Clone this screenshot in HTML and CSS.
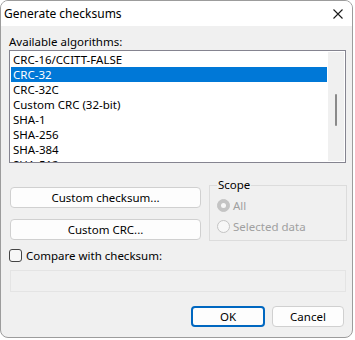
FILE: index.html
```html
<!DOCTYPE html>
<html lang="en">
<head>
    <meta charset="UTF-8">
    <title>Generate checksums</title>
    <link rel="stylesheet" href="styles.css">
</head>
<body>
    <div class="window">
        <div class="titlebar">
            <span class="title">Generate checksums</span>
            <svg class="close" width="10" height="10" viewBox="0 0 10 10">
                <path d="M0.5 0.5 L9.5 9.5 M9.5 0.5 L0.5 9.5" stroke="#1a1a1a" stroke-width="1.1" fill="none"/>
            </svg>
        </div>
        <div class="content">
            <div class="label">Available algorithms:</div>
            <div class="listbox">
                <div class="items">
                    <div class="item">CRC-16/CCITT-FALSE</div>
                    <div class="item selected">CRC-32</div>
                    <div class="item">CRC-32C</div>
                    <div class="item">Custom CRC (32-bit)</div>
                    <div class="item">SHA-1</div>
                    <div class="item">SHA-256</div>
                    <div class="item">SHA-384</div>
                    <div class="item">SHA-512</div>
                </div>
                <div class="scrollbar"><div class="thumb"></div></div>
            </div>
            <div class="middle">
                <div class="buttons">
                    <button class="btn wide">Custom checksum...</button>
                    <button class="btn wide">Custom CRC...</button>
                </div>
                <fieldset class="scope">
                    <legend>Scope</legend>
                    <div class="radio"><span class="dot checked"></span>All</div>
                    <div class="radio"><span class="dot"></span>Selected data</div>
                </fieldset>
            </div>
            <label class="check"><span class="box"></span>Compare with checksum:</label>
            <div class="field"></div>
            <div class="footer">
                <button class="btn ok">OK</button>
                <button class="btn cancel">Cancel</button>
            </div>
        </div>
    </div>
</body>
</html>
```

FILE: styles.css
```css
body {
    margin: 0;
    background-color: #ffffff;
    font-family: "Noto Sans", sans-serif;
    font-size: 11.5px;
    color: #000000;
}
.window {
    box-sizing: border-box;
    width: 353px;
    height: 338px;
    border: 1px solid #9c9c9c;
    border-radius: 8px;
    overflow: hidden;
    background-color: #f0f0f0;
}
.titlebar {
    height: 25px;
    background-color: #ffffff;
    display: flex;
    align-items: center;
    justify-content: space-between;
    padding: 0 9px 0 3px;
}
.title {
    line-height: 15px;
    font-size: 12px;
}
.close {
    display: block;
}
.content {
    padding: 8px 0 0 8px;
}
.label {
    line-height: 15px;
    margin-bottom: 1px;
}
.listbox {
    box-sizing: border-box;
    width: 337px;
    height: 113px;
    border: 1px solid #858490;
    background-color: #ffffff;
    padding: 1px;
    display: flex;
    overflow: hidden;
}
.items {
    flex: 1;
    margin-right: 1px;
}
.item {
    height: 15px;
    line-height: 15px;
    padding-left: 2px;
    white-space: nowrap;
}
.item.selected {
    background-color: #0078d7;
    color: #ffffff;
}
.scrollbar {
    width: 16px;
    background-color: #f0f0f0;
    display: flex;
    justify-content: center;
}
.thumb {
    width: 2px;
    height: 32px;
    margin-top: 42px;
    background-color: #8a8a8a;
    border-radius: 1px;
}
.middle {
    display: flex;
    gap: 8px;
    margin-top: 15px;
}
.buttons {
    display: flex;
    flex-direction: column;
    gap: 11px;
    padding-top: 9px;
    padding-left: 1px;
}
.btn {
    box-sizing: border-box;
    height: 21px;
    border: 1px solid #d0d0d0;
    border-radius: 4px;
    background-color: #fdfdfd;
    font-family: "Noto Sans", sans-serif;
    font-size: 11.5px;
    color: #000000;
    padding: 0;
    line-height: 17px;
}
.btn.wide {
    width: 191px;
}
.scope {
    box-sizing: border-box;
    width: 138px;
    height: 63px;
    margin: 0;
    border: 1px solid #dcdcdc;
    padding: 3px 0 0 7px;
}
.scope legend {
    padding: 0 1px;
    margin-left: 0;
    line-height: 14px;
}
.radio {
    display: flex;
    align-items: center;
    gap: 3px;
    height: 21px;
    color: #a0a0a0;
}
.dot {
    box-sizing: border-box;
    width: 13px;
    height: 13px;
    border-radius: 50%;
    border: 1px solid #c4c4c4;
    background-color: #f7f7f7;
    display: flex;
    align-items: center;
    justify-content: center;
}
.dot.checked {
    background-color: #c4c4c4;
}
.dot.checked::after {
    content: "";
    width: 5px;
    height: 5px;
    border-radius: 50%;
    background-color: #f7f7f7;
}
.check {
    display: flex;
    align-items: center;
    gap: 4px;
    margin-top: 7px;
    height: 15px;
}
.box {
    box-sizing: border-box;
    width: 13px;
    height: 13px;
    border: 1px solid #444444;
    border-radius: 3px;
    background-color: #f7f7f7;
}
.field {
    box-sizing: border-box;
    width: 336px;
    height: 22px;
    margin: 7px 0 0 1px;
    border: 1px solid #e4e4e4;
    background-color: #f0f0f0;
}
.footer {
    display: flex;
    justify-content: flex-end;
    gap: 7px;
    margin-top: 14px;
    padding-right: 8px;
}
.btn.ok {
    width: 74px;
    border: 2px solid #0067c0;
    line-height: 15px;
}
.btn.cancel {
    width: 72px;
}
```
